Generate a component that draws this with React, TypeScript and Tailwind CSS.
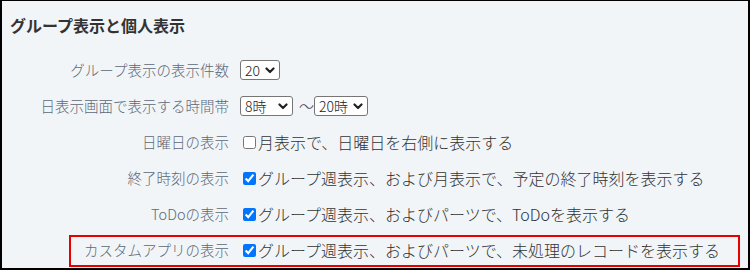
import React from 'react'

const font = '"Noto Sans CJK JP", "Noto Sans", sans-serif'

function Chevron() {
  return (
    <svg width="10" height="7" viewBox="0 0 10 7" className="shrink-0">
      <polyline points="1.5,1.5 5,5 8.5,1.5" fill="none" stroke="#222" strokeWidth="2.2" strokeLinecap="round" strokeLinejoin="round" />
    </svg>
  )
}

function FakeSelect({ value, width }: { value: string; width: string }) {
  return (
    <div className={`${width} h-[20px] bg-white border border-[#767676] rounded-[3px] flex items-center justify-between pl-[4px] pr-[4px] text-[14px] text-[#222] leading-none`}>
      <span>{value}</span>
      <Chevron />
    </div>
  )
}

function Check({ checked }: { checked: boolean }) {
  return (
    <input
      type="checkbox"
      defaultChecked={checked}
      className="m-0 ml-[3px] mr-[2px] w-[13px] h-[13px] shrink-0 accent-[#0075ff]"
    />
  )
}

function Row({ label, children, boxed }: { label: string; children: React.ReactNode; boxed?: boolean }) {
  return (
    <div className="relative h-[36px] flex items-center">
      <div className="w-[227px] text-right text-[14.5px] font-light text-[#5d6877] whitespace-nowrap">{label}</div>
      <div className="ml-[11px] flex items-center text-[16px] font-light text-[#333] whitespace-nowrap">{children}</div>
      {boxed && (
        <div className="absolute left-[67px] right-[8px] top-[3px] bottom-[1px] border-2 border-[#e60000] pointer-events-none" />
      )}
    </div>
  )
}

export default function App() {
  return (
    <div
      className="w-[750px] h-[270px] bg-[#f1f5f8] border-2 border-t border-black overflow-hidden"
      style={{ fontFamily: font }}
    >
      <div className="pt-[13px] pl-[8px] h-[51px]">
        <h2 className="text-[16px] leading-[22px] font-bold text-[#333]">グループ表示と個人表示</h2>
      </div>

      <Row label="グループ表示の表示件数">
        <FakeSelect value="20" width="w-[40px]" />
      </Row>
      <Row label="日表示画面で表示する時間帯">
        <FakeSelect value="8時" width="w-[53px]" />
        <span className="ml-[6px] text-[15px] text-[#444]">〜</span>
        <FakeSelect value="20時" width="w-[54px]" />
      </Row>
      <Row label="日曜日の表示">
        <Check checked={false} />
        <span>月表示で、日曜日を右側に表示する</span>
      </Row>
      <Row label="終了時刻の表示">
        <Check checked />
        <span>グループ週表示、および月表示で、予定の終了時刻を表示する</span>
      </Row>
      <Row label="ToDoの表示">
        <Check checked />
        <span>グループ週表示、およびパーツで、ToDoを表示する</span>
      </Row>
      <Row label="カスタムアプリの表示" boxed>
        <Check checked />
        <span>グループ週表示、およびパーツで、未処理のレコードを表示する</span>
      </Row>
    </div>
  )
}
